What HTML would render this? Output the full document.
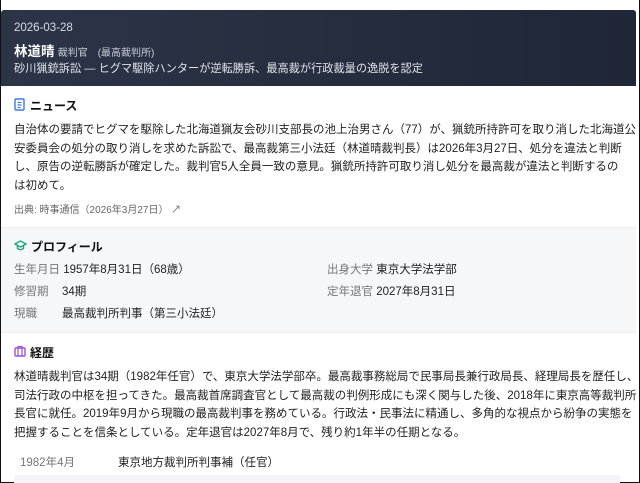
<!DOCTYPE html>
<html><head><meta charset="utf-8"><style>
*{margin:0;padding:0;box-sizing:border-box}
body{width:640px;height:483px;overflow:hidden;background:#fff;font-family:"Liberation Sans","Noto Sans CJK JP",sans-serif;color:#222;font-size:11.5px;position:relative}
.frame{position:absolute;left:0;top:0;width:640px;height:483px;border:1px solid #111;border-top:none}
.hdr{position:absolute;left:1px;top:10px;width:635px;height:76px;background:linear-gradient(90deg,#2c3548,#1f2636);color:#e8ebf0;border-radius:3px 3px 0 0}
.abs{position:absolute;white-space:nowrap}
.sec{position:absolute;left:14px;font-weight:bold;font-size:12px;color:#111;white-space:nowrap}
.p{position:absolute;left:14px;line-height:18.6px;color:#222;white-space:nowrap}
.lab{color:#777}
</style></head><body>
<div class="frame"></div>
<div class="hdr">
<div class="abs" style="left:13px;top:12px;font-size:11.5px;color:#d8dce4">2026-03-28</div>
<div class="abs" style="left:13px;top:30px;"><b style="font-size:13.5px;color:#fff">林道晴</b> <span style="font-size:10px;color:#c9ced8">裁判官　(最高裁判所)</span></div>
<div class="abs" style="left:13px;top:50px;font-size:11.2px;color:#dfe3ea">砂川猟銃訴訟 — ヒグマ駆除ハンターが逆転勝訴、最高裁が行政裁量の逸脱を認定</div>
</div>
<svg class="abs" style="left:14px;top:98px" width="12" height="13" viewBox="0 0 12 13"><rect x="1" y="1" width="9" height="11" rx="1" fill="none" stroke="#3b7be0" stroke-width="1.4"/><path d="M3.5 4.5h4M3.5 7h4M3.5 9.5h3" stroke="#3b7be0" stroke-width="1.2"/></svg>
<div class="sec" style="left:30px;top:97px">ニュース</div>
<div class="p" style="top:121px">自治体の要請でヒグマを駆除した北海道猟友会砂川支部長の池上治男さん（77）が、猟銃所持許可を取り消した北海道公<br>安委員会の処分の取り消しを求めた訴訟で、最高裁第三小法廷（林道晴裁判長）は2026年3月27日、処分を違法と判断<br>し、原告の逆転勝訴が確定した。裁判官5人全員一致の意見。猟銃所持許可取り消し処分を最高裁が違法と判断するの<br>は初めて。</div>
<div class="abs" style="left:14px;top:201px;font-size:10px;color:#666">出典: 時事通信（2026年3月27日） ↗</div>
<div class="abs" style="left:1px;top:227px;width:635px;height:106px;background:#f6f7f9;border-top:1px solid #eceef1;border-bottom:1px solid #eceef1"></div>
<svg class="abs" style="left:14px;top:240px" width="13" height="11" viewBox="0 0 13 11"><path d="M1 4l5.5-3 5.5 3-5.5 3z" fill="none" stroke="#1aa37a" stroke-width="1.4"/><path d="M3.5 5.5v3c2 1.5 4 1.5 6 0v-3" fill="none" stroke="#1aa37a" stroke-width="1.4"/></svg>
<div class="sec" style="left:31px;top:238px">プロフィール</div>
<div class="abs" style="left:14px;top:261px"><span class="lab">生年月日</span> 1957年8月31日（68歳）</div>
<div class="abs" style="left:14px;top:283px"><span class="lab">修習期</span></div><div class="abs" style="left:62px;top:283px">34期</div>
<div class="abs" style="left:14px;top:305px"><span class="lab">現職</span></div><div class="abs" style="left:62px;top:305px">最高裁判所判事（第三小法廷）</div>
<div class="abs" style="left:327px;top:261px"><span class="lab">出身大学</span> 東京大学法学部</div>
<div class="abs" style="left:327px;top:283px"><span class="lab">定年退官</span> 2027年8月31日</div>
<svg class="abs" style="left:14px;top:345px" width="12" height="12" viewBox="0 0 12 12"><rect x="1" y="3" width="10" height="8" rx="1" fill="none" stroke="#9b4fd6" stroke-width="1.4"/><path d="M4 3V1.5h4V3M4 3v8M8 3v8" fill="none" stroke="#9b4fd6" stroke-width="1.2"/></svg>
<div class="sec" style="left:30px;top:344px">経歴</div>
<div class="p" style="top:368px">林道晴裁判官は34期（1982年任官）で、東京大学法学部卒。最高裁事務総局で民事局長兼行政局長、経理局長を歴任し、<br>司法行政の中枢を担ってきた。最高裁首席調査官として最高裁の判例形成にも深く関与した後、2018年に東京高等裁判所<br>長官に就任。2019年9月から現職の最高裁判事を務めている。行政法・民事法に精通し、多角的な視点から紛争の実態を<br>把握することを信条としている。定年退官は2027年8月で、残り約1年半の任期となる。</div>
<div class="abs" style="left:20px;top:454px;color:#777">1982年4月</div>
<div class="abs" style="left:118px;top:454px">東京地方裁判所判事補（任官）</div>
<div class="abs" style="left:14px;top:475px;width:606px;height:8px;background:#f6f3fb"></div>
</body></html>
